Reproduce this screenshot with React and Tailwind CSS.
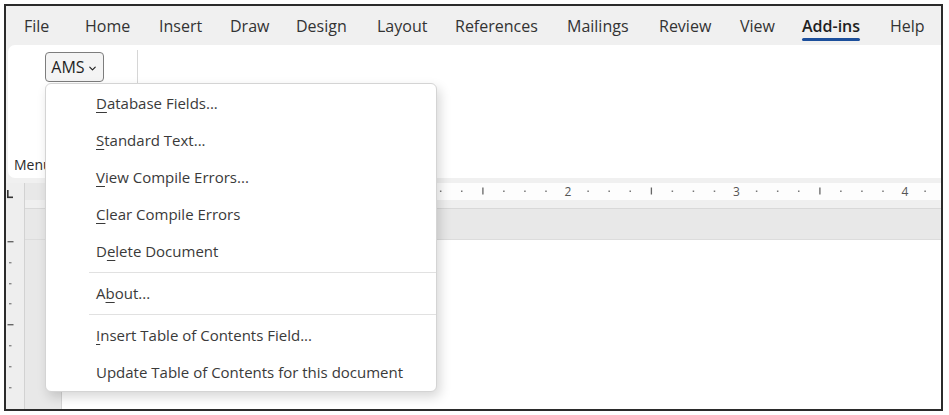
import { ChevronDown } from 'lucide-react';

const tabs = [
  { label: 'File', w: 'w-[61px]' },
  { label: 'Home', w: 'w-[74px]' },
  { label: 'Insert', w: 'w-[71px]' },
  { label: 'Draw', w: 'w-[66px]' },
  { label: 'Design', w: 'w-[81px]' },
  { label: 'Layout', w: 'w-[78px]' },
  { label: 'References', w: 'w-[112px]' },
  { label: 'Mailings', w: 'w-[92px]' },
  { label: 'Review', w: 'w-[81px]' },
  { label: 'View', w: 'w-[62px]' },
  { label: 'Add-ins', w: 'w-[88px]', active: true },
  { label: 'Help', w: 'w-[50px]' },
];

// [before, mnemonic, after]
const menuGroups = [
  [
    ['', 'D', 'atabase Fields...'],
    ['', 'S', 'tandard Text...'],
    ['', 'V', 'iew Compile Errors...'],
    ['', 'C', 'lear Compile Errors'],
    ['D', 'e', 'lete Document'],
  ],
  [['A', 'b', 'out...']],
  [
    ['', 'I', 'nsert Table of Contents Field...'],
    ['Update Table of Contents for this document', '', ''],
  ],
];

function HorizontalRuler() {
  // ruler origin (relative to svg) and one inch in px
  const inch = 168.5;
  const zero = 231 - 63;
  const marks = [];
  for (let i = 0; i < 48; i++) {
    const x = zero + (i * inch) / 8;
    if (x > 880) break;
    const k = i % 8;
    if (k === 0) {
      if (i > 0)
        marks.push(
          <text key={i} x={x + 1} y={12.5} fontSize="12" textAnchor="middle" fill="#555" fontFamily="'Open Sans', sans-serif">
            {i / 8}
          </text>
        );
    } else if (k === 4) {
      marks.push(<rect key={i} x={x - 0.5} y={4.5} width={1.3} height={7} fill="#666" />);
    } else {
      marks.push(<rect key={i} x={x - 0.7} y={7.5} width={1.5} height={1.5} fill="#777" />);
    }
  }
  return (
    <svg width="878" height="17" className="block">
      {marks}
    </svg>
  );
}

function VerticalRuler() {
  const ys = [58, 79, 100, 120, 141, 162, 183, 204];
  return (
    <svg width="19" height="226" className="block">
      <rect x="1" y="7" width="1.6" height="8" fill="#333" />
      <rect x="1" y="13.5" width="6" height="1.6" fill="#333" />
      {ys.map((y, i) =>
        i === 0 || i === 4 ? (
          <rect key={y} x="1.5" y={y} width="6" height="1.4" fill="#666" />
        ) : (
          <rect key={y} x="3" y={y} width="2.5" height="1.4" fill="#888" />
        )
      )}
    </svg>
  );
}

export default function App() {
  return (
    <div className="w-[949px] h-[415px] bg-white pl-[4px] pt-[4px] pr-[6px] pb-[4px] font-['Open_Sans',sans-serif]">
      <div className="relative h-full border-2 border-[#2b2b2b] bg-[#f0f0f0] flex flex-col overflow-hidden">
        {/* Tabs */}
        <div className="h-[39px] flex items-center pl-[18px] text-[16px] text-[#333333] shrink-0">
          {tabs.map((t) => (
            <div key={t.label} className={`${t.w} shrink-0`}>
              <span className={`relative inline-block ${t.active ? 'font-semibold text-[#1f1f1f]' : ''}`}>
                {t.label}
                {t.active && (
                  <span className="absolute left-0 right-0 -bottom-[3px] h-[3px] rounded-full bg-[#1b4e9b]" />
                )}
              </span>
            </div>
          ))}
        </div>

        {/* Ribbon */}
        <div className="ml-[2px] h-[133px] shrink-0 bg-white rounded-l-[7px] flex">
          <div className="w-[129px] h-full flex flex-col justify-between pt-[7px] pb-[6px]">
            <div className="pl-[37px]">
              <button className="w-[59px] h-[30px] flex items-center justify-center gap-[2px] rounded-[4px] border border-[#7d7d7d] bg-[#f4f4f4] text-[16px] text-[#1f1f1f]">
                AMS
                <ChevronDown size={11} strokeWidth={2.5} className="mt-[2px]" />
              </button>
            </div>
            <div className="pl-[6px] text-[14px] text-[#2b2b2b] leading-none">Menu</div>
          </div>
          <div className="w-px bg-[#d6d6d6] my-[5px]" />
        </div>

        {/* Document area */}
        <div className="mt-[5px] flex-1 flex bg-[#e8e8e8]">
          <div className="w-[19px] bg-[#eeeeee] border-r border-[#d2d2d2]">
            <VerticalRuler />
          </div>
          <div className="flex-1 flex flex-col">
            <div className="h-[17px] flex">
              <div className="w-[37px] bg-[#e8e8e8]" />
              <div className="flex-1 bg-[#fdfdfd]">
                <HorizontalRuler />
              </div>
            </div>
            <div className="h-[9px] bg-[#efefef] border-b border-[#d8d8d8]" />
            <div className="h-[31px] bg-[#e8e8e8] border-b border-[#dcdcdc]" />
            <div className="flex-1 flex">
              <div className="w-[37px] bg-[#e8e8e8] border-r border-[#d4d4d4]" />
              <div className="flex-1 bg-white" />
            </div>
          </div>
        </div>

        {/* Dropdown menu */}
        <div className="absolute left-[39px] top-[77px] w-[392px] h-[309px] bg-white border border-[#d4d4d4] rounded-[6px] shadow-[3px_5px_12px_rgba(0,0,0,0.16)] pt-[1px] text-[15px] text-[#3a3a3a]">
          {menuGroups.map((group, gi) => (
            <div key={gi}>
              {gi > 0 && <div className="ml-[43px] my-[2px] h-px bg-[#e1e1e1]" />}
              {group.map(([a, m, b]) => (
                <div key={a + m + b} className="h-[37px] flex items-center pl-[50px]">
                  {a}
                  {m && <span className="underline underline-offset-[3px] decoration-1">{m}</span>}
                  {b}
                </div>
              ))}
            </div>
          ))}
        </div>
      </div>
    </div>
  );
}
